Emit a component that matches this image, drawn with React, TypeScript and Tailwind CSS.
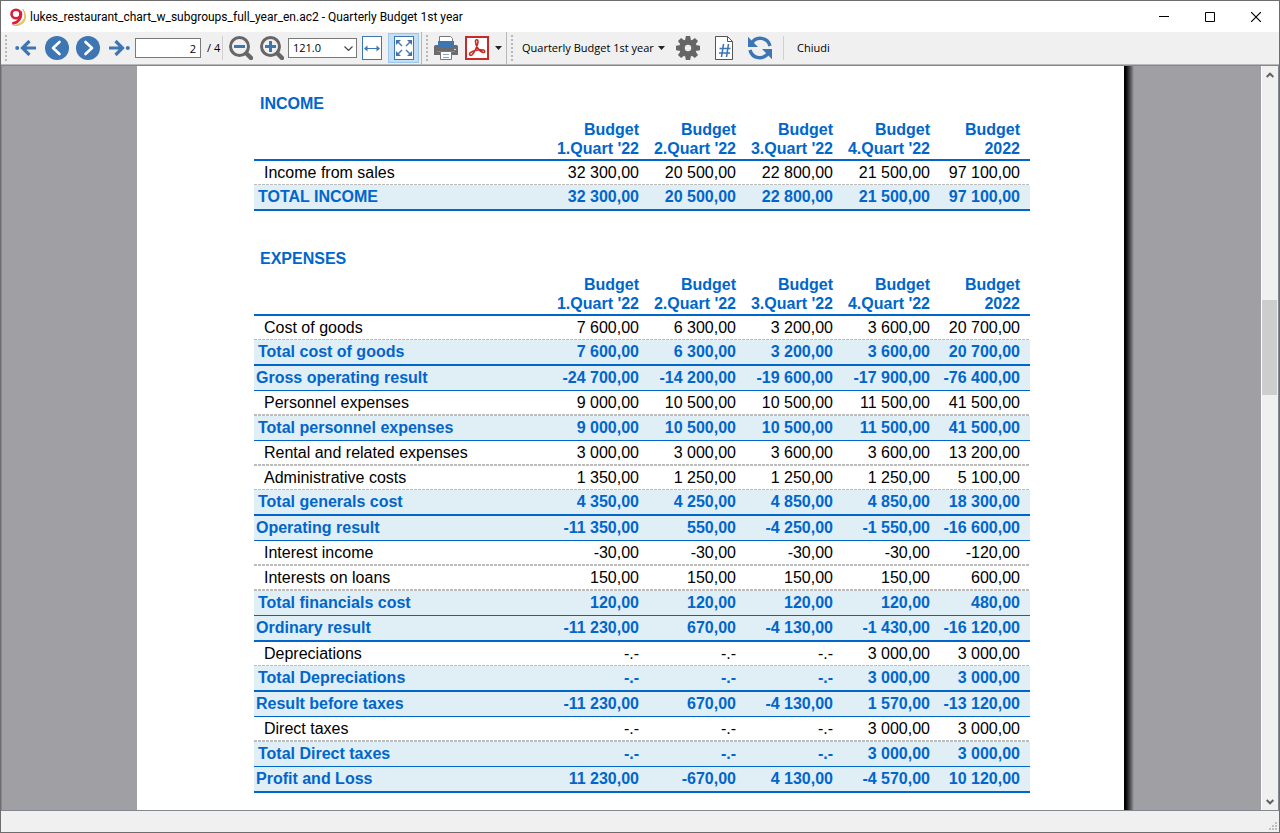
import { useState } from 'react'
import type { ReactNode } from 'react'

type Kind = 'item' | 'total' | 'result'
type Rule = 'dash' | 'dash2' | 'thin' | 'thick'

interface Row {
  label: string
  kind: Kind
  rule: Rule
  values: string[]
}

const HEADERS = [
  ['Budget', "1.Quart '22"],
  ['Budget', "2.Quart '22"],
  ['Budget', "3.Quart '22"],
  ['Budget', "4.Quart '22"],
  ['Budget', '2022'],
]

const INCOME: Row[] = [
  { label: 'Income from sales', kind: 'item', rule: 'dash', values: ['32 300,00', '20 500,00', '22 800,00', '21 500,00', '97 100,00'] },
  { label: 'TOTAL INCOME', kind: 'total', rule: 'thick', values: ['32 300,00', '20 500,00', '22 800,00', '21 500,00', '97 100,00'] },
]

const EXPENSES: Row[] = [
  { label: 'Cost of goods', kind: 'item', rule: 'dash', values: ['7 600,00', '6 300,00', '3 200,00', '3 600,00', '20 700,00'] },
  { label: 'Total cost of goods', kind: 'total', rule: 'thick', values: ['7 600,00', '6 300,00', '3 200,00', '3 600,00', '20 700,00'] },
  { label: 'Gross operating result', kind: 'result', rule: 'thin', values: ['-24 700,00', '-14 200,00', '-19 600,00', '-17 900,00', '-76 400,00'] },
  { label: 'Personnel expenses', kind: 'item', rule: 'dash2', values: ['9 000,00', '10 500,00', '10 500,00', '11 500,00', '41 500,00'] },
  { label: 'Total personnel expenses', kind: 'total', rule: 'thin', values: ['9 000,00', '10 500,00', '10 500,00', '11 500,00', '41 500,00'] },
  { label: 'Rental and related expenses', kind: 'item', rule: 'dash2', values: ['3 000,00', '3 000,00', '3 600,00', '3 600,00', '13 200,00'] },
  { label: 'Administrative costs', kind: 'item', rule: 'dash', values: ['1 350,00', '1 250,00', '1 250,00', '1 250,00', '5 100,00'] },
  { label: 'Total generals cost', kind: 'total', rule: 'thick', values: ['4 350,00', '4 250,00', '4 850,00', '4 850,00', '18 300,00'] },
  { label: 'Operating result', kind: 'result', rule: 'thin', values: ['-11 350,00', '550,00', '-4 250,00', '-1 550,00', '-16 600,00'] },
  { label: 'Interest income', kind: 'item', rule: 'dash2', values: ['-30,00', '-30,00', '-30,00', '-30,00', '-120,00'] },
  { label: 'Interests on loans', kind: 'item', rule: 'dash2', values: ['150,00', '150,00', '150,00', '150,00', '600,00'] },
  { label: 'Total financials cost', kind: 'total', rule: 'thin', values: ['120,00', '120,00', '120,00', '120,00', '480,00'] },
  { label: 'Ordinary result', kind: 'result', rule: 'thick', values: ['-11 230,00', '670,00', '-4 130,00', '-1 430,00', '-16 120,00'] },
  { label: 'Depreciations', kind: 'item', rule: 'dash', values: ['-.-', '-.-', '-.-', '3 000,00', '3 000,00'] },
  { label: 'Total Depreciations', kind: 'total', rule: 'thick', values: ['-.-', '-.-', '-.-', '3 000,00', '3 000,00'] },
  { label: 'Result before taxes', kind: 'result', rule: 'thin', values: ['-11 230,00', '670,00', '-4 130,00', '1 570,00', '-13 120,00'] },
  { label: 'Direct taxes', kind: 'item', rule: 'dash2', values: ['-.-', '-.-', '-.-', '3 000,00', '3 000,00'] },
  { label: 'Total Direct taxes', kind: 'total', rule: 'thin', values: ['-.-', '-.-', '-.-', '3 000,00', '3 000,00'] },
  { label: 'Profit and Loss', kind: 'result', rule: 'thick', values: ['11 230,00', '-670,00', '4 130,00', '-4 570,00', '10 120,00'] },
]

const kindClass: Record<Kind, string> = {
  item: 'leading-[23px] text-black',
  total: 'leading-6 text-[#0066cc] font-bold bg-[#e0eef6]',
  result: 'leading-6 text-[#0066cc] font-bold bg-[#e0eef6]',
}

const labelClass: Record<Kind, string> = {
  item: 'pl-2.5 font-normal',
  total: 'pl-1 font-bold',
  result: 'pl-0.5 font-bold',
}

// dashes are painted on the row so they run unbroken under all cells
const DASHES = 'bg-[repeating-linear-gradient(90deg,#bcbcbc_0_3px,transparent_3px_4px)] bg-bottom bg-no-repeat'

const rowRule: Record<Rule, string> = {
  dash: `${DASHES} bg-[length:100%_1px]`,
  dash2: `${DASHES} bg-[length:100%_2px]`,
  thin: '',
  thick: '',
}

const cellRule: Record<Rule, string> = {
  dash: 'border-b border-transparent',
  dash2: 'border-b-2 border-transparent',
  thin: 'border-b border-[#0066cc]',
  thick: 'border-b-2 border-[#0066cc]',
}

function BudgetTable({ title, rows }: { title: string; rows: Row[] }) {
  return (
    <section>
      <h2 className="pl-1.5 mb-[7px] font-bold leading-[19px] text-[#0066cc]">{title}</h2>
      <table className="w-full table-fixed border-separate border-spacing-0">
        <colgroup>
          <col />
          <col className="w-[97px]" />
          <col className="w-[97px]" />
          <col className="w-[97px]" />
          <col className="w-[97px]" />
          <col className="w-[90px]" />
        </colgroup>
        <thead>
          <tr className="leading-[19px] text-[#0066cc]">
            <td className="border-b-2 border-[#0066cc]" />
            {HEADERS.map(([top, bottom]) => (
              <th key={bottom} scope="col" className="border-b-2 border-[#0066cc] p-0 pr-2.5 pb-px text-right font-bold whitespace-nowrap">
                {top}
                <br />
                {bottom}
              </th>
            ))}
          </tr>
        </thead>
        <tbody>
          {rows.map(row => (
            <tr key={row.label} className={`${kindClass[row.kind]} ${rowRule[row.rule]}`}>
              <th scope="row" className={`p-0 text-left whitespace-nowrap ${labelClass[row.kind]} ${cellRule[row.rule]}`}>
                {row.label}
              </th>
              {row.values.map((value, i) => (
                <td key={i} className={`p-0 pr-2.5 text-right whitespace-nowrap ${cellRule[row.rule]}`}>
                  {value}
                </td>
              ))}
            </tr>
          ))}
        </tbody>
      </table>
    </section>
  )
}

function ToolButton({ label, className = 'w-[31px]', children }: { label: string; className?: string; children: ReactNode }) {
  return (
    <button aria-label={label} title={label} className={`h-[30px] shrink-0 flex items-center justify-center ${className}`}>
      {children}
    </button>
  )
}

function Grip() {
  return (
    <svg width="3" height="26" viewBox="0 0 3 26" className="shrink-0" aria-hidden="true">
      {[0, 4, 8, 12, 16, 20, 24].map(y => (
        <rect key={y} y={y} width="2" height="2" fill="#b8b8b8" />
      ))}
    </svg>
  )
}

function Caret() {
  return (
    <svg width="7" height="4" viewBox="0 0 7 4" className="shrink-0" aria-hidden="true">
      <path d="M0 0h7L3.5 4z" fill="#222" />
    </svg>
  )
}

function AppLogo() {
  return (
    <svg width="17" height="18" viewBox="0 0 17 18" className="shrink-0" aria-hidden="true">
      <path d="M13.500 1c4.200 5.500 3 14.500-9 16.500 2 .6 11.500.5 12-8.500.1-3.600-1.400-6.500-3-8z" fill="#f3cf5a" stroke="#c9a646" strokeWidth=".6" />
      <ellipse cx="7" cy="6" rx="4.500" ry="4.300" fill="#fff" stroke="#d81e3a" strokeWidth="2.600" />
      <path d="M11.600 3.500c1.400 6-1.800 11.300-8.400 12" fill="none" stroke="#d81e3a" strokeWidth="2.600" />
    </svg>
  )
}

function EdgeArrow({ flip = false }: { flip?: boolean }) {
  return (
    <svg width="22" height="16" viewBox="0 0 22 16" className={flip ? '-scale-x-100' : ''} aria-hidden="true">
      <circle cx="2.200" cy="8" r="2" fill="#3d76b3" />
      <path d="M21 8H8M14.500 1 7.500 8l7 7" fill="none" stroke="#3d76b3" strokeWidth="3.200" />
    </svg>
  )
}

function RoundArrow({ d }: { d: string }) {
  return (
    <svg width="24" height="24" viewBox="0 0 24 24" aria-hidden="true">
      <circle cx="12" cy="12" r="12" fill="#3d76b3" />
      <path d={d} fill="none" stroke="#fff" strokeWidth="2.600" strokeLinecap="round" strokeLinejoin="round" />
    </svg>
  )
}

function Magnifier({ plus = false }: { plus?: boolean }) {
  return (
    <svg width="24" height="24" viewBox="0 0 24 24" aria-hidden="true">
      <path d="m17 17 5 5" stroke="#666" strokeWidth="4.500" strokeLinecap="round" />
      <circle cx="10.500" cy="10.500" r="9" fill="#f0f0f0" stroke="#666" strokeWidth="3" />
      <path d={plus ? 'M5 10.500h11M10.500 5v11' : 'M5 10.500h11'} stroke="#3d76b3" strokeWidth="3" />
    </svg>
  )
}

function FitWidthIcon() {
  return (
    <svg width="20" height="24" viewBox="0 0 20 24" aria-hidden="true">
      <rect x=".5" y=".5" width="19" height="23" fill="#fff" stroke="#3d76b3" />
      <path d="M3 12.500h14" stroke="#3d76b3" />
      <path d="M5.500 9.500 2 12.500l3.500 3zM14.500 9.500l3.500 3-3.500 3z" fill="#3d76b3" />
    </svg>
  )
}

function FitPageIcon() {
  return (
    <svg width="20" height="24" viewBox="0 0 20 24" aria-hidden="true">
      <rect x=".5" y=".5" width="19" height="23" fill="#fff" stroke="#3d76b3" />
      <path d="M3 5l5 5M17 5l-5 5M3 19l5-5M17 19l-5-5" stroke="#3d76b3" strokeWidth="1.400" />
      <path d="M2 4h5L2 9zM18 4h-5l5 5zM2 20h5l-5-5zM18 20h-5l5-5z" fill="#3d76b3" />
    </svg>
  )
}

function PrinterIcon() {
  return (
    <svg width="24" height="24" viewBox="0 0 24 24" aria-hidden="true">
      <path d="M1.500 9h21A1.500 1.500 0 0 1 24 10.500V19H0v-8.500A1.500 1.500 0 0 1 1.500 9z" fill="#6b6b6b" />
      <path d="M5.500 8V.500h11l2 2V8z" fill="#fff" stroke="#777" />
      <path d="M4 5h16v6a1 1 0 0 1-1 1H5a1 1 0 0 1-1-1z" fill="#3d76b3" />
      <path d="M3 15.500h18" stroke="#8a8a8a" />
      <path d="M6.500 15.500h11v8h-11z" fill="#fff" stroke="#777" />
      <path d="M9 18.500h6M9 21.500h6" stroke="#7fa6cf" />
      <path d="M20 13.500h2" stroke="#ddd" />
    </svg>
  )
}

function PdfIcon() {
  return (
    <svg width="24" height="24" viewBox="0 0 24 24" aria-hidden="true">
      <rect x="1" y="1" width="22" height="22" fill="#fff" stroke="#c92a26" strokeWidth="2" />
      <path
        d="M10.500 5.500c0-2.500 2.800-2.500 2.500.5-.4 4-3.800 11-6 12.800-1.900 1.400-3.600-.7-1.600-2.200 2.600-2 9.600-3.600 13-2.500 2.300.8 1.500 2.800-.6 2.300-3-.7-7.300-6-7.300-10.900z"
        fill="none"
        stroke="#c92a26"
        strokeWidth="1.600"
      />
    </svg>
  )
}

function GearIcon() {
  return (
    <svg width="24" height="24" viewBox="0 0 24 24" aria-hidden="true">
      <g fill="#666">
        {[0, 45, 90, 135, 180, 225, 270, 315].map(a => (
          <path key={a} d="M9.800 0h4.400l.8 5H9z" transform={`rotate(${a} 12 12)`} />
        ))}
      </g>
      <circle cx="12" cy="12" r="6" fill="none" stroke="#666" strokeWidth="5.500" />
    </svg>
  )
}

function PageNumberIcon() {
  return (
    <svg width="18" height="24" viewBox="0 0 18 24" aria-hidden="true">
      <path d="M.5.500h12l5 5v18H.5z" fill="#fff" stroke="#555" />
      <path d="M12.500.500v5h5" fill="none" stroke="#555" />
      <path d="M8.500 8 6.500 21M13.500 8l-2 13M4.500 12.500h11M4 17h11" fill="none" stroke="#3d76b3" strokeWidth="1.600" />
    </svg>
  )
}

function RefreshIcon() {
  return (
    <svg width="24" height="24" viewBox="0 0 24 24" aria-hidden="true">
      <path d="M3.500 7.500A10 10 0 0 1 22 10M20.500 16.500A10 10 0 0 1 2 14" fill="none" stroke="#3d76b3" strokeWidth="3.400" />
      <path d="M0 1v10h10l-3.500-3.500zM24 23V13H14l3.500 3.500z" fill="#3d76b3" />
      <path d="M0 1l9 10H0zM24 23l-9-10h9z" fill="#3d76b3" />
    </svg>
  )
}

function TitleBar() {
  return (
    <header className="flex h-[31px] shrink-0 items-center bg-white pl-2 font-[Roboto,sans-serif] text-[12px] text-black">
      <AppLogo />
      <h1 className="ml-1 min-w-0 flex-1 truncate">lukes_restaurant_chart_w_subgroups_full_year_en.ac2 - Quarterly Budget 1st year</h1>
      <button aria-label="Minimize" className="flex h-full w-[46px] items-center justify-center">
        <svg width="10" height="10" viewBox="0 0 10 10"><path d="M0 4.500h10" stroke="#000" /></svg>
      </button>
      <button aria-label="Maximize" className="flex h-full w-[46px] items-center justify-center">
        <svg width="10" height="10" viewBox="0 0 10 10"><path d="M.5.500h9v9h-9z" fill="none" stroke="#000" /></svg>
      </button>
      <button aria-label="Close" className="flex h-full w-[46px] items-center justify-center">
        <svg width="10" height="10" viewBox="0 0 10 10"><path d="m0 0 10 10M10 0 0 10" stroke="#000" strokeWidth="1.200" /></svg>
      </button>
    </header>
  )
}

function Toolbar() {
  const [page, setPage] = useState('2')
  const [zoom, setZoom] = useState('121.0')

  return (
    <div className="flex h-[33px] shrink-0 items-center border-b border-[#b8b8b8] bg-[#f0f0f0] pl-1 font-['Open_Sans',sans-serif] text-[11px] text-black">
      <Grip />
      <div className="ml-0.5 flex">
        <ToolButton label="First page"><EdgeArrow /></ToolButton>
        <ToolButton label="Previous page"><RoundArrow d="M14.500 6 8 12l6.500 6" /></ToolButton>
        <ToolButton label="Next page"><RoundArrow d="M9.500 6 16 12l-6.500 6" /></ToolButton>
        <ToolButton label="Last page"><EdgeArrow flip /></ToolButton>
      </div>
      <input
        aria-label="Page"
        value={page}
        onChange={e => setPage(e.target.value)}
        className="ml-px h-5 w-[66px] shrink-0 border border-[#7a7a7a] bg-white pr-1 text-right"
      />
      <span className="ml-1.5 w-[15px] shrink-0 whitespace-nowrap">/ 4</span>
      <div className="h-6 w-px bg-[#d0d0d0]" />
      <div className="ml-0.5 flex">
        <ToolButton label="Zoom out"><Magnifier /></ToolButton>
        <ToolButton label="Zoom in"><Magnifier plus /></ToolButton>
      </div>
      <div className="relative ml-px shrink-0">
        <select
          aria-label="Zoom"
          value={zoom}
          onChange={e => setZoom(e.target.value)}
          className="block h-5 w-[69px] appearance-none border border-[#7a7a7a] bg-white pl-1"
        >
          <option>100.0</option>
          <option>121.0</option>
          <option>150.0</option>
        </select>
        <svg width="9" height="6" viewBox="0 0 9 6" className="pointer-events-none absolute top-2 right-1" aria-hidden="true">
          <path d="m.5.500 4 4 4-4" fill="none" stroke="#444" strokeWidth="1.200" />
        </svg>
      </div>
      <ToolButton label="Fit width" className="w-[30px]"><FitWidthIcon /></ToolButton>
      <ToolButton label="Fit page" className="ml-px w-[31px] border border-[#99c9ef] bg-[#c5def3]"><FitPageIcon /></ToolButton>
      <div className="ml-0.5 h-full w-px bg-[#b8b8b8]" />
      <div className="ml-1 flex items-center">
        <Grip />
        <ToolButton label="Print" className="ml-px w-[31px]"><PrinterIcon /></ToolButton>
        <ToolButton label="Export to PDF"><PdfIcon /></ToolButton>
        <ToolButton label="Export options" className="w-3"><Caret /></ToolButton>
      </div>
      <div className="ml-0.5 h-full w-px bg-[#b8b8b8]" />
      <div className="ml-1 flex items-center">
        <Grip />
        <button className="ml-2 flex h-[30px] w-[143px] items-center justify-between whitespace-nowrap">
          Quarterly Budget 1st year
          <Caret />
        </button>
        <ToolButton label="Settings" className="ml-[5px] w-9"><GearIcon /></ToolButton>
        <ToolButton label="Page numbers" className="w-9"><PageNumberIcon /></ToolButton>
        <ToolButton label="Refresh" className="w-9"><RefreshIcon /></ToolButton>
      </div>
      <div className="ml-[5px] h-6 w-px bg-[#d0d0d0]" />
      <button className="ml-[5px] h-[30px] px-2">Chiudi</button>
    </div>
  )
}

function ScrollBar() {
  return (
    <div className="flex w-[17px] shrink-0 flex-col items-center border-l border-white bg-[#f0f0f0]">
      <button aria-label="Scroll up" className="flex h-[17px] w-full items-center justify-center">
        <svg width="8" height="6" viewBox="0 0 8 6"><path d="m.7 5 3.300-3.300L7.300 5" fill="none" stroke="#606060" strokeWidth="2" /></svg>
      </button>
      {/* Track */}
      <div className="flex w-full flex-1 flex-col pr-px">
        <div className="grow-[217]" />
        <div className="grow-[95] bg-[#cdcdcd]" />
        <div className="grow-[398]" />
      </div>
      <button aria-label="Scroll down" className="flex h-[17px] w-full items-center justify-center">
        <svg width="8" height="6" viewBox="0 0 8 6"><path d="m.7 1 3.300 3.300L7.300 1" fill="none" stroke="#606060" strokeWidth="2" /></svg>
      </button>
    </div>
  )
}

export default function App() {
  return (
    <div className="flex h-screen flex-col overflow-hidden border border-[#6d6d6d] bg-[#f0f0f0]">
      <TitleBar />
      <Toolbar />

      {/* Preview area */}
      <main className="flex min-h-0 flex-1 border border-[#828790] bg-[#a0a0a4]">
        <div className="flex min-w-0 flex-1 justify-center overflow-hidden pr-0.5">
          <article className="flex w-[987px] shrink-0 flex-col gap-[38px] bg-white pt-7 pr-[94px] pl-[117px] font-['Liberation_Sans',Arial,sans-serif] text-[16px]">
            <BudgetTable title="INCOME" rows={INCOME} />
            <BudgetTable title="EXPENSES" rows={EXPENSES} />
          </article>
          <div className="-mr-2.5 w-2.5 shrink-0 bg-linear-to-r from-black to-[#a0a0a4]" />
        </div>
        <ScrollBar />
      </main>

      {/* Status bar */}
      <footer className="flex h-[21px] shrink-0 items-end justify-end p-0.5">
        <svg width="8" height="8" viewBox="0 0 8 8" fill="#bfbfbf" aria-hidden="true">
          <path d="M6 0h2v2H6zM3 3h2v2H3zM6 3h2v2H6zM0 6h2v2H0zM3 6h2v2H3zM6 6h2v2H6z" />
        </svg>
      </footer>
    </div>
  )
}
